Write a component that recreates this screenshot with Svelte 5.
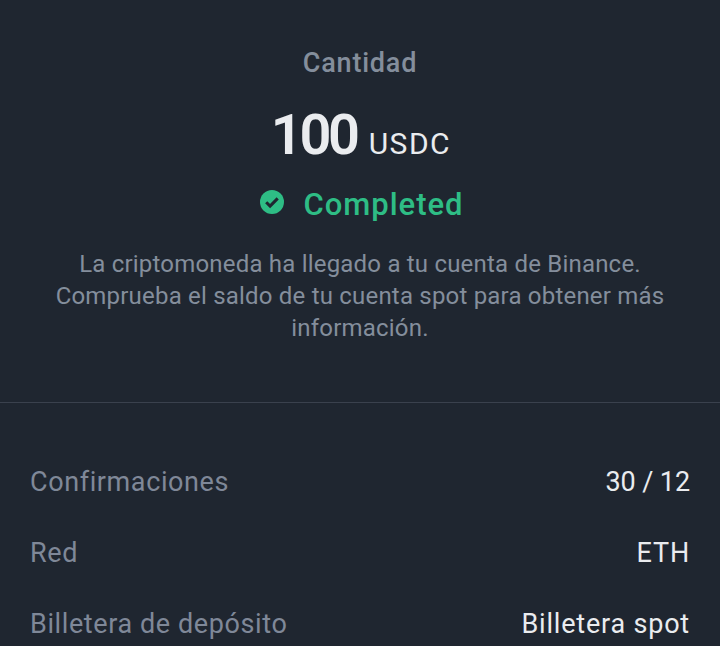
<script>
  const rows = [
    { label: 'Confirmaciones', value: '30 / 12' },
    { label: 'Red', value: 'ETH' },
    { label: 'Billetera de depósito', value: 'Billetera spot' }
  ];
</script>

<div class="page">
  <section class="summary">
    <div class="title">Cantidad</div>
    <div class="amount"><span class="num">100</span><span class="unit">USDC</span></div>
    <div class="status">
      <svg width="26" height="26" viewBox="0 0 26 26">
        <circle cx="13" cy="13" r="12" fill="#2ebd85" />
        <path d="M7.2 13.2l3.9 3.9 7.6-7.7" fill="none" stroke="#1f2630" stroke-width="3" />
      </svg>
      <span>Completed</span>
    </div>
    <p class="msg">La criptomoneda ha llegado a tu cuenta de Binance.<br />Comprueba el saldo de tu cuenta spot para obtener más<br />información.</p>
  </section>
  <div class="rows">
    {#each rows as row}
      <div class="row">
        <span class="label">{row.label}</span>
        <span class="value">{row.value}</span>
      </div>
    {/each}
  </div>
</div>

<style>
  :global(body) {
    margin: 0;
    background: #1f2630;
  }

  .page {
    height: 646px;
    overflow: hidden;
    background: #1f2630;
    font-family: Roboto, "DejaVu Sans", sans-serif;
  }

  .summary {
    display: flex;
    flex-direction: column;
    align-items: center;
    padding: 45px 30px 58px;
    border-bottom: 1px solid #3a414d;
  }

  .title {
    font-size: 27px;
    line-height: 36px;
    font-weight: 500;
    letter-spacing: 0.8px;
    color: #848e9c;
  }

  .amount {
    display: flex;
    align-items: baseline;
    margin-top: 22px;
    margin-left: 2px;
    color: #eaecef;
  }

  .num {
    font-size: 56px;
    line-height: 64px;
    font-weight: 600;
    letter-spacing: -3.4px;
  }

  .unit {
    margin-left: 12px;
    font-size: 30px;
    font-weight: 400;
    letter-spacing: 1.5px;
  }

  .status {
    display: flex;
    align-items: center;
    gap: 18px;
    margin-top: 18px;
    margin-left: 3px;
    font-size: 31px;
    line-height: 40px;
    font-weight: 500;
    letter-spacing: 1px;
    color: #2ebd85;
  }

  .status svg {
    margin-top: -6px;
  }

  .msg {
    margin: 23px 0 0;
    text-align: center;
    font-size: 24px;
    line-height: 32px;
    letter-spacing: 0.2px;
    color: #848e9c;
  }

  .rows {
    display: flex;
    flex-direction: column;
    gap: 31px;
    padding: 59px 30px 0;
  }

  .row {
    display: flex;
    justify-content: space-between;
    font-size: 27px;
    line-height: 40px;
    letter-spacing: 0.6px;
  }

  .row:first-child .value {
    letter-spacing: -0.1px;
  }

  .label {
    color: #7f8898;
  }

  .value {
    color: #eaecef;
    letter-spacing: 0.8px;
  }
</style>
